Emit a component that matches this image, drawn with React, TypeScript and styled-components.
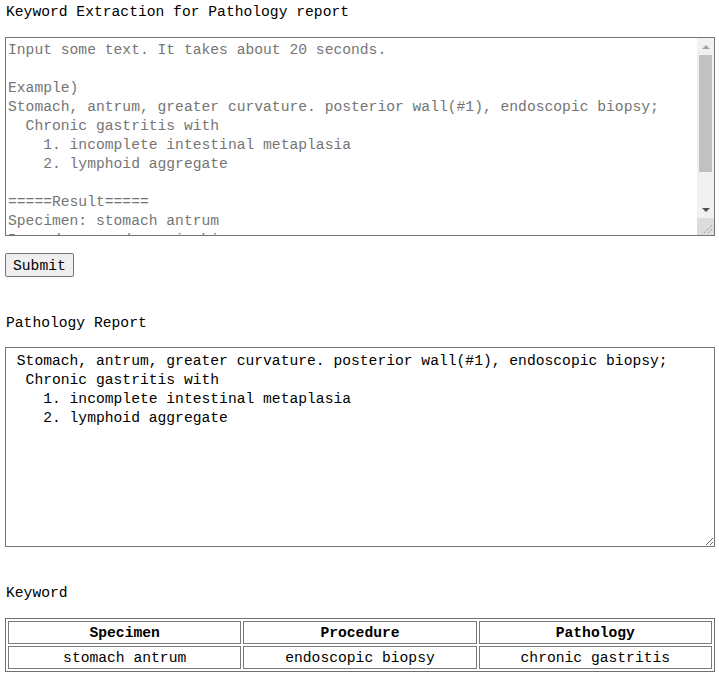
import React from 'react';
import styled, { createGlobalStyle } from 'styled-components';

const GlobalStyle = createGlobalStyle`
  body {
    margin: 0;
    background: #ffffff;
  }
`;

const mono = `"Liberation Mono", "DejaVu Sans Mono", monospace`;

const placeholder = [
  'Input some text. It takes about 20 seconds.',
  '',
  'Example)',
  'Stomach, antrum, greater curvature. posterior wall(#1), endoscopic biopsy;',
  '  Chronic gastritis with',
  '    1. incomplete intestinal metaplasia',
  '    2. lymphoid aggregate',
  '',
  '=====Result=====',
  'Specimen: stomach antrum',
  'Procedure: endoscopic biopsy',
  'Pathology: chronic gastritis',
  '           intestinal metaplasia',
  '           lymphoid aggregate',
].join('\n');

const report = [
  ' Stomach, antrum, greater curvature. posterior wall(#1), endoscopic biopsy;',
  '  Chronic gastritis with',
  '    1. incomplete intestinal metaplasia',
  '    2. lymphoid aggregate',
].join('\n');

const keywords = [
  { specimen: 'stomach antrum', procedure: 'endoscopic biopsy', pathology: 'chronic gastritis' },
];

function FakeScrollbar() {
  return (
    <ScrollRail>
      <ArrowButton>
        <Arrow $dir="up" />
      </ArrowButton>
      <Track>
        <Thumb />
      </Track>
      <ArrowButton>
        <Arrow $dir="down" />
      </ArrowButton>
      <Corner>
        <svg width="11" height="11" viewBox="0 0 11 11">
          <path d="M10 2 L2 10 M10 6 L6 10" stroke="#8a8a8a" strokeWidth="1" strokeDasharray="1 1" />
        </svg>
      </Corner>
    </ScrollRail>
  );
}

export default function App() {
  return (
    <Page>
      <GlobalStyle />
      <Label>Keyword Extraction for Pathology report</Label>
      <InputWrap>
        <InputArea placeholder={placeholder} />
        <FakeScrollbar />
      </InputWrap>
      <SubmitButton type="button">Submit</SubmitButton>

      <Label $top={36}>Pathology Report</Label>
      <ReportArea defaultValue={report} />

      <Label $top={36}>Keyword</Label>
      <KeywordTable>
        <thead>
          <tr>
            <HeadCell>Specimen</HeadCell>
            <HeadCell>Procedure</HeadCell>
            <HeadCell>Pathology</HeadCell>
          </tr>
        </thead>
        <tbody>
          {keywords.map((k) => (
            <tr key={k.specimen}>
              <Cell>{k.specimen}</Cell>
              <Cell>{k.procedure}</Cell>
              <Cell>{k.pathology}</Cell>
            </tr>
          ))}
        </tbody>
      </KeywordTable>
    </Page>
  );
}

const Page = styled.div`
  display: flex;
  flex-direction: column;
  align-items: flex-start;
  padding: 2px 4px 6px 5px;
  font-family: ${mono};
  font-size: 14.67px;
  line-height: 19px;
  color: #000000;
`;

const Label = styled.div<{ $top?: number }>`
  margin-top: ${(p) => p.$top ?? 0}px;
  padding: 1px 0 0 1px;
  height: 18px;
`;

const TextBox = styled.textarea`
  display: block;
  box-sizing: border-box;
  width: 710px;
  padding: 3px 2px 1px;
  border: 1px solid #767676;
  border-radius: 0;
  font-family: ${mono};
  font-size: 14.67px;
  line-height: 19px;
  color: #000000;
  background: #ffffff;
  outline: none;
  white-space: pre;
  overflow-wrap: normal;
  overflow: hidden;

  &::placeholder {
    color: #757575;
  }
`;

const InputWrap = styled.div`
  position: relative;
  margin-top: 16px;
`;

const InputArea = styled(TextBox)`
  height: 199px;
  padding-right: 19px;
  resize: none;
`;

const ReportArea = styled(TextBox)`
  height: 200px;
  margin-top: 15px;
  padding-top: 4px;
  padding-bottom: 0;
`;

const ScrollRail = styled.div`
  position: absolute;
  top: 1px;
  right: 1px;
  bottom: 1px;
  width: 17px;
  display: flex;
  flex-direction: column;
  background: #f1f1f1;
  pointer-events: none;
`;

const ArrowButton = styled.div`
  height: 17px;
  display: flex;
  align-items: center;
  justify-content: center;
  flex-shrink: 0;
`;

const Arrow = styled.div<{ $dir: 'up' | 'down' }>`
  width: 0;
  height: 0;
  border-left: 4px solid transparent;
  border-right: 4px solid transparent;
  ${(p) =>
    p.$dir === 'up'
      ? 'border-bottom: 4px solid #a3a3a3;'
      : 'border-top: 4px solid #505050;'}
`;

const Track = styled.div`
  flex: 1;
  display: flex;
  flex-direction: column;
  padding: 0 2px;
`;

const Thumb = styled.div`
  height: 117px;
  background: #c1c1c1;
`;

const Corner = styled.div`
  height: 17px;
  flex-shrink: 0;
  background: #dcdcdc;
  display: flex;
  align-items: flex-end;
  justify-content: flex-end;
  padding: 0 1px 1px 0;
  box-sizing: border-box;
`;

const SubmitButton = styled.button`
  box-sizing: border-box;
  margin-top: 17px;
  height: 24px;
  padding: 2px 7px 0;
  font-family: ${mono};
  font-size: 14.67px;
  line-height: 19px;
  color: #000000;
  background: #efefef;
  border: 1px solid #767676;
  border-radius: 2px;
`;

const KeywordTable = styled.table`
  margin-top: 16px;
  width: 710px;
  table-layout: fixed;
  border: 1px solid #6f6f6f;
  border-spacing: 2px;
  font-family: ${mono};
  font-size: 14.67px;
  line-height: 19px;
`;

const Cell = styled.td`
  border: 1px solid #7a7a7a;
  padding: 2px 1px 0;
  text-align: center;
`;

const HeadCell = styled.th`
  border: 1px solid #7a7a7a;
  padding: 2px 1px 0;
  text-align: center;
  font-weight: bold;
`;
